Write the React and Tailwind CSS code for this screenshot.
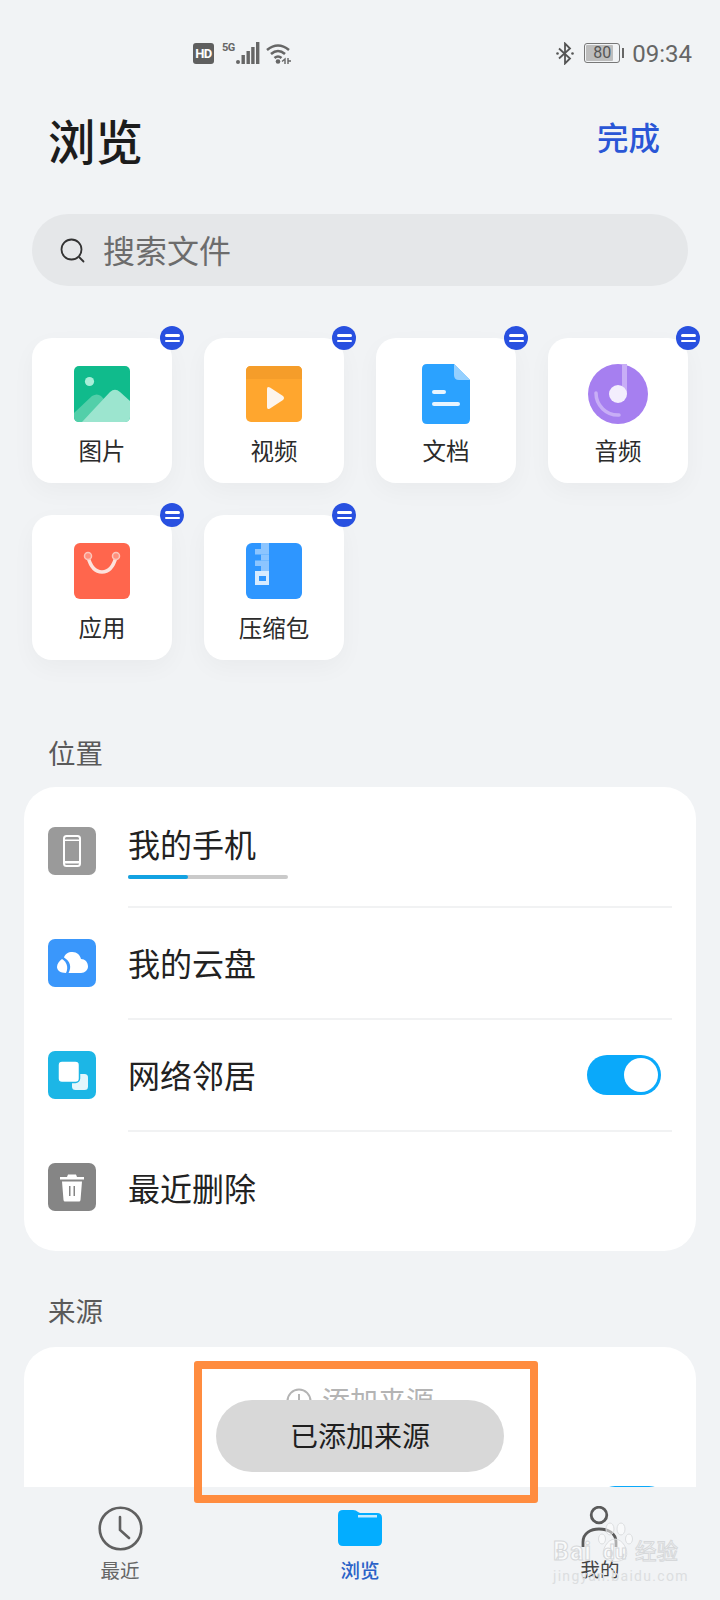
import React from "react";

const FONT = "font-['Roboto','Noto_Sans_CJK_SC',sans-serif]";

const ImageIcon = () => (
  <svg width="56" height="56" viewBox="0 0 56 56">
    <rect width="56" height="56" rx="5" fill="#10bb8c" />
    <circle cx="15.500" cy="15.500" r="4.600" fill="#a8eed8" />
    <path d="M0 47 L18 30 Q23 27 27 30 L40 44 L30 56 H5 Q0 56 0 51 Z" fill="#52cfa9" />
    <path d="M8 56 L36 26 Q41 21.500 46 26 L56 35 V51 Q56 56 51 56 Z" fill="#9ce5cf" />
  </svg>
);

const VideoIcon = () => (
  <svg width="56" height="56" viewBox="0 0 56 56">
    <rect width="56" height="56" rx="5" fill="#ffa62e" />
    <path d="M0 13 V5 Q0 0 5 0 H51 Q56 0 56 5 V13 Z" fill="#f59d2a" />
    <path d="M21 23 Q21 20 24 21.500 L37 30 Q39 32 37 34 L24 42.500 Q21 44 21 41 Z" fill="#fdf5ec" />
  </svg>
);

const DocIcon = () => (
  <svg width="48" height="60" viewBox="0 0 48 60">
    <path d="M5 0 H32 L48 16 V55 Q48 60 43 60 H5 Q0 60 0 55 V5 Q0 0 5 0 Z" fill="#2ba2ff" />
    <path d="M32 0 L48 16 H37 Q32 16 32 11 Z" fill="#95d0ff" />
    <rect x="10" y="26" width="14" height="4" rx="2" fill="#e8f5ff" />
    <rect x="10" y="38" width="28" height="4" rx="2" fill="#e8f5ff" />
  </svg>
);

const MusicIcon = () => (
  <svg width="60" height="60" viewBox="0 0 60 60">
    <circle cx="30" cy="30" r="30" fill="#a67ff0" />
    <rect x="34" y="0" width="5" height="30" fill="#c8aef6" />
    <circle cx="30" cy="30" r="9" fill="#f3eefd" />
    <path d="M8 29 A22 22 0 0 0 31 51" fill="none" stroke="#c8aef6" strokeWidth="3.500" strokeLinecap="round" />
  </svg>
);

const BagIcon = () => (
  <svg width="56" height="56" viewBox="0 0 56 56">
    <rect width="56" height="56" rx="6" fill="#ff664d" />
    <path d="M14 14 Q18 29 28 29 Q38 29 42 14" fill="none" stroke="#fde3dd" strokeWidth="3.500" strokeLinecap="round" />
    <circle cx="14" cy="13" r="3.500" fill="#ff8f7c" stroke="#fbc6bb" strokeWidth="1.500" />
    <circle cx="42" cy="13" r="3.500" fill="#ff8f7c" stroke="#fbc6bb" strokeWidth="1.500" />
  </svg>
);

const ZipIcon = () => (
  <svg width="56" height="56" viewBox="0 0 56 56">
    <rect width="56" height="56" rx="6" fill="#2e96ff" />
    <rect x="15" y="0" width="8" height="6" fill="#8cc5ff" />
    <rect x="9" y="6" width="14" height="5.500" fill="#8cc5ff" />
    <rect x="15" y="11.500" width="8" height="6" fill="#8cc5ff" />
    <rect x="9" y="17.500" width="14" height="5.500" fill="#8cc5ff" />
    <rect x="15" y="23" width="8" height="5" fill="#8cc5ff" />
    <path d="M9 28 H23 V42 H9 Z M13 33 V38 H20 V33 Z" fill="#d7ebff" fillRule="evenodd" />
  </svg>
);

const PhoneIcon = () => (
  <svg width="48" height="48" viewBox="0 0 48 48">
    <rect width="48" height="48" rx="7" fill="#9a9a9a" />
    <rect x="16" y="9" width="16" height="30" rx="2.500" fill="none" stroke="#fff" strokeWidth="2" />
    <rect x="16" y="12.500" width="16" height="1.500" fill="#fff" />
    <rect x="16" y="34" width="16" height="2.500" fill="#fff" />
  </svg>
);

const CloudIcon = () => (
  <svg width="48" height="48" viewBox="0 0 48 48">
    <rect width="48" height="48" rx="7" fill="#3a97fb" />
    <path d="M16 18.500 C17 15 20 13 24.500 13 C29 13 32 16 33 20 C37 20 40 23 40 27.500 C40 31 37 34 33 34 H20.500 C24 28 22 22 16 18.500 Z" fill="#fff" />
    <path d="M14 20 C18 22 21 28 18 34 C12 34 9 31 9 28 C9 25 11 22 14 20 Z" fill="#fff" />
  </svg>
);

const NearbyIcon = () => (
  <svg width="48" height="48" viewBox="0 0 48 48">
    <rect width="48" height="48" rx="7" fill="#1cb6e6" />
    <rect x="24" y="23" width="16" height="16" rx="3.500" fill="#e3f6fc" />
    <rect x="10" y="10" width="21.500" height="21.500" rx="4" fill="#fff" stroke="#1cb6e6" strokeWidth="1.500" />
  </svg>
);

const TrashIcon = () => (
  <svg width="48" height="48" viewBox="0 0 48 48">
    <rect width="48" height="48" rx="7" fill="#858585" />
    <path d="M20 11.500 H28 L29 14 H36 V16.500 H12 V14 H19 Z" fill="#fff" />
    <path d="M14 18.500 H34 L32.500 37 Q32.300 38.500 31 38.500 H17 Q15.700 38.500 15.500 37 Z M21 23 V33 H22.500 V23 Z M25.500 23 V33 H27 V23 Z" fill="#fff" fillRule="evenodd" />
  </svg>
);

const categories = [
  { label: "图片", icon: ImageIcon },
  { label: "视频", icon: VideoIcon },
  { label: "文档", icon: DocIcon },
  { label: "音频", icon: MusicIcon },
  { label: "应用", icon: BagIcon },
  { label: "压缩包", icon: ZipIcon },
];

function CategoryCard({ label, icon: Icon }) {
  return (
    <div className="relative h-[145px] rounded-[20px] bg-white pt-[26px] shadow-[0_8px_24px_rgba(0,0,0,0.035)]">
      <div className="flex h-[60px] items-center justify-center">
        <Icon />
      </div>
      <div className="mt-[12px] text-center text-[23.500px] leading-[32px] text-[#2b2b2b]">{label}</div>
      {/* remove badge */}
      <div className="absolute -right-[12px] -top-[12px] flex h-[24px] w-[24px] flex-col items-center justify-center gap-[3px] rounded-full bg-[#2850e0]">
        <span className="h-[2.500px] w-[15px] rounded-full bg-white" />
        <span className="h-[2.500px] w-[15px] rounded-full bg-white" />
      </div>
    </div>
  );
}

function Toggle() {
  return (
    <div className="flex h-[40px] w-[74px] items-center justify-end rounded-full bg-[#0aa9fa] pr-[3px]">
      <div className="h-[34px] w-[34px] rounded-full bg-white" />
    </div>
  );
}

function LocationRow({ icon: Icon, label, last, raised, children }) {
  return (
    <div className="flex h-[112px] pl-[24px]">
      <div className="flex w-[80px] shrink-0 items-center pb-[2px]">
        <Icon />
      </div>
      <div className={`relative mr-[24px] flex flex-1 items-center justify-between ${last ? "" : "border-b-2 border-[#f1f2f3]"}`}>
        <span className={`text-[32px] leading-[44px] text-[#222] ${raised ? "pb-[10px]" : "pt-[4px]"}`}>{label}</span>
        {children}
      </div>
    </div>
  );
}

function StatusBar() {
  return (
    <div className="flex h-[84px] items-start pl-[193px] pr-[28px] pt-[42px] text-[#666]">
      <div className="mt-[1px] flex h-[21px] w-[21px] items-center justify-center rounded-[3px] bg-[#5f5f5f] text-[13px] font-bold tracking-[-0.5px] text-white">HD</div>
      <span className="ml-[8px] mt-[1px] text-[11px] font-bold leading-[10px] tracking-[-0.5px]">5G</span>
      <svg className="ml-[1px]" width="24" height="22" viewBox="0 0 24 22">
        <circle cx="2" cy="20" r="2" fill="#666" />
        <rect x="5.500" y="13" width="3.400" height="9" fill="#666" />
        <rect x="10.500" y="9" width="3.400" height="13" fill="#666" />
        <rect x="15.200" y="5" width="3.400" height="17" fill="#666" />
        <rect x="20" y="0" width="3.400" height="22" fill="#666" />
      </svg>
      <svg className="ml-[6px] mt-[1px]" width="26" height="21" viewBox="0 0 26 21">
        <path d="M1 7 Q12 -2 23 7" fill="none" stroke="#666" strokeWidth="2.600" />
        <path d="M5 11 Q12 5 19 11" fill="none" stroke="#666" strokeWidth="2.600" />
        <path d="M8.500 15 Q12 12 15.500 15" fill="none" stroke="#666" strokeWidth="2.600" />
        <circle cx="12" cy="18.500" r="2.300" fill="#666" />
        <path d="M16 18.500 L19 16 V21 M22 15 V21 M22 18 L25 18" stroke="#666" strokeWidth="1.400" fill="none" />
      </svg>
      <svg className="ml-auto" width="18" height="23" viewBox="0 0 18 23">
        <path d="M3 6.500 L14 16.500 L9 21.500 V1.500 L14 6.500 L3 16.500" fill="none" stroke="#555" strokeWidth="1.800" />
        <circle cx="1.500" cy="11.500" r="1.300" fill="#555" />
        <circle cx="16.500" cy="11.500" r="1.300" fill="#555" />
      </svg>
      <div className="ml-[10px] mt-[1px] flex h-[20px] w-[36px] rounded-[3px] border border-[#777] p-[1px]">
        <div className="flex h-full w-[27px] items-center justify-center rounded-[1px] bg-[#bdbdbd] pl-[5px] text-[16px] leading-none text-[#555]">80</div>
      </div>
      <div className="ml-[2px] mt-[6px] h-[10px] w-[2px] bg-[#666]" />
      <span className="ml-[8px] -mt-[2px] text-[24px] leading-[28px] text-[#666]">09:34</span>
    </div>
  );
}

function BottomNav() {
  return (
    <div className="absolute bottom-0 left-0 right-0 grid h-[113px] grid-cols-3 bg-[#f1f3f5]">
      <div className="flex flex-col items-center pt-[19px]">
        <svg width="45" height="45" viewBox="0 0 45 45">
          <circle cx="22.500" cy="22.500" r="20.800" fill="none" stroke="#606060" strokeWidth="2.600" />
          <path d="M22 11 V24 L31 32" fill="none" stroke="#606060" strokeWidth="2.600" strokeLinecap="round" />
        </svg>
        <span className="mt-[7px] text-[19.500px] leading-[28px] text-[#666]">最近</span>
      </div>
      <div className="flex flex-col items-center pt-[23px]">
        <svg width="44" height="36" viewBox="0 0 44 36">
          <path d="M5 0 H15 Q18 0 20 2 L22 3 H39 Q44 3 44 8 V31 Q44 36 39 36 H5 Q0 36 0 31 V5 Q0 0 5 0 Z" fill="#03adff" />
          <rect x="20" y="5" width="19" height="2.500" fill="#c5ebff" />
        </svg>
        <span className="mt-[12px] text-[19.500px] font-medium leading-[28px] text-[#2a62c8]">浏览</span>
      </div>
      <div className="flex flex-col items-center pt-[19px]">
        <svg width="38" height="42" viewBox="0 0 38 42">
          <circle cx="18" cy="9" r="7.800" fill="none" stroke="#5a5a5a" strokeWidth="2.800" />
          <path d="M2 41 V36 C2 27 10 23 18 23 C27 23 35 27 35 36 V41" fill="none" stroke="#5a5a5a" strokeWidth="2.800" />
        </svg>
        <span className="mt-[9px] text-[19.500px] leading-[28px] text-[#444]">我的</span>
      </div>
    </div>
  );
}

// faint jingyan logo sitting on top of the tab bar
function Watermark() {
  return (
    <div className="absolute left-[553px] top-[1522px] h-[62px] w-[130px]">
      <svg className="absolute left-[43px] top-0" width="38" height="42" viewBox="0 0 38 42">
        <g fill="#ffffff" fillOpacity="0.5" stroke="#dcdee0" strokeWidth="1">
          <ellipse cx="6" cy="17" rx="3.500" ry="5" />
          <ellipse cx="14" cy="7" rx="4" ry="6" />
          <ellipse cx="25" cy="7" rx="4" ry="6" />
          <ellipse cx="33" cy="17" rx="3.500" ry="5" />
          <path d="M19 17 C27 17 33 29 30 35 C26 41 12 41 8 35 C5 29 11 17 19 17 Z" />
        </g>
      </svg>
      <span className="absolute left-0 top-[15px] text-[25px] font-bold leading-[30px] tracking-[1px] text-white/60 [-webkit-text-stroke:1px_#d6d8da]">Bai</span>
      <span className="absolute left-[50px] top-[17px] text-[21px] font-bold leading-[26px] text-white/60 [-webkit-text-stroke:1px_#d6d8da]">du</span>
      <span className="absolute left-[82px] top-[15px] text-[21.500px] leading-[30px] text-white/60 [-webkit-text-stroke:1px_#d6d8da]">经验</span>
      <span className="absolute left-0 top-[46px] text-[14px] leading-[16px] tracking-[1.300px] text-[#dcdee0]">jingyan.baidu.com</span>
    </div>
  );
}

export default function App() {
  return (
    <div className={`relative h-[1600px] w-[720px] overflow-hidden bg-[#f1f3f5] ${FONT}`}>
      <StatusBar />

      <div className="mt-[30px] flex h-[56px] items-center justify-between pl-[48px] pr-[60px]">
        <h1 className="mt-[4px] text-[47.500px] font-medium leading-[56px] text-[#1c1c1c]">浏览</h1>
        <span className="-mt-[4px] text-[31.500px] font-medium text-[#2a56d6]">完成</span>
      </div>

      <div className="mx-[32px] mt-[44px] flex h-[72px] items-center rounded-full bg-[#e5e7e9] pl-[28px]">
        <svg width="25" height="25" viewBox="0 0 25 25">
          <circle cx="11.500" cy="11.500" r="10" fill="none" stroke="#333" strokeWidth="1.800" />
          <path d="M19.500 19.500 L23.500 23.500" stroke="#333" strokeWidth="1.800" strokeLinecap="round" />
        </svg>
        <span className="ml-[18px] mt-[4px] text-[32px] leading-[44px] text-[#6c6c6c]">搜索文件</span>
      </div>

      <div className="mt-[52px] grid grid-cols-4 gap-[32px] px-[32px]">
        {categories.map((c) => (
          <CategoryCard key={c.label} label={c.label} icon={c.icon} />
        ))}
      </div>

      <div className="ml-[48px] mt-[75px] text-[27.500px] leading-[40px] text-[#5a5a5a]">位置</div>
      <div className="mx-[24px] mt-[12px] rounded-[32px] bg-white pb-[7px] pt-[9px]">
        <LocationRow icon={PhoneIcon} label="我的手机" raised>
          <div className="absolute bottom-[27px] left-0 h-[4px] w-[160px] rounded-full bg-[#cacaca]">
            <div className="h-full w-[60px] rounded-full bg-[#12a2e2]" />
          </div>
        </LocationRow>
        <LocationRow icon={CloudIcon} label="我的云盘" />
        <LocationRow icon={NearbyIcon} label="网络邻居">
          <div className="mr-[11px]">
            <Toggle />
          </div>
        </LocationRow>
        <LocationRow icon={TrashIcon} label="最近删除" last />
      </div>

      <div className="ml-[48px] mt-[42px] text-[27.500px] leading-[40px] text-[#5a5a5a]">来源</div>
      <div className="mx-[24px] mt-[14px] h-[300px] rounded-[32px] bg-white">
        <div className="flex h-[112px] items-center justify-center gap-[10px] text-[#b4b4b4]">
          <svg className="-mt-[4px]" width="26" height="26" viewBox="0 0 26 26">
            <circle cx="13" cy="13" r="11.500" fill="none" stroke="#b4b4b4" strokeWidth="2" />
            <path d="M13 6 V20 M6 13 H20" stroke="#b4b4b4" strokeWidth="2" />
          </svg>
          <span className="text-[28px] leading-[40px]">添加来源</span>
        </div>
        <div className="ml-[571px] mt-[27px] w-[74px]">
          <Toggle />
        </div>
      </div>

      <BottomNav />

      {/* toast */}
      <div className="absolute left-[216px] top-[1400px] flex h-[72px] w-[288px] items-center justify-center rounded-full bg-[#d8d8d8] pt-[4px] text-[28px] text-[#1f1f1f]">
        已添加来源
      </div>

      {/* orange annotation box */}
      <div className="absolute left-[194px] top-[1361px] h-[142px] w-[344px] rounded-[3px] border-[8px] border-[#ff8c3f]" />

      <Watermark />
    </div>
  );
}
